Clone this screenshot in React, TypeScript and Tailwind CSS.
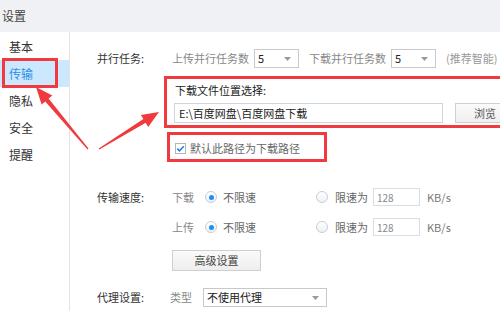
import React from "react";

const RED = "#f03a3d";

function arrowPoints(tx: number, ty: number, hx: number, hy: number) {
  const dx = hx - tx;
  const dy = hy - ty;
  const len = Math.hypot(dx, dy);
  const ux = dx / len;
  const uy = dy / len;
  const nx = -uy;
  const ny = ux;
  const headLen = 17;
  const headW = 14;
  const bx = hx - ux * headLen;
  const by = hy - uy * headLen;
  const p = (x: number, y: number) => `${x.toFixed(1)},${y.toFixed(1)}`;
  return [
    p(tx + nx * 0.6, ty + ny * 0.6),
    p(bx + nx * 2.2, by + ny * 2.2),
    p(bx + nx * headW / 2, by + ny * headW / 2),
    p(hx, hy),
    p(bx - nx * headW / 2, by - ny * headW / 2),
    p(bx - nx * 2.2, by - ny * 2.2),
    p(tx - nx * 0.6, ty - ny * 0.6),
  ].join(" ");
}

const Caret = () => (
  <svg width="7" height="4" viewBox="0 0 7 4" className="shrink-0">
    <path d="M0 0 L7 0 L3.5 4 Z" fill="#9a9a9a" />
  </svg>
);

const Select = ({ value, w }: { value: string; w: string }) => (
  <div
    className={`${w} h-[19px] border border-[#c9c9c9] bg-white flex items-center justify-between pl-[3px] pr-[7px] text-[11px] text-[#222]`}
  >
    <span>{value}</span>
    <Caret />
  </div>
);

const Radio = ({ checked }: { checked?: boolean }) => (
  <div className="w-[12px] h-[12px] rounded-full border border-[#c8cdd4] bg-gradient-to-b from-white to-[#eef1f5] flex items-center justify-center shrink-0">
    {checked && <div className="w-[5px] h-[5px] rounded-full bg-[#1f8ef1]" />}
  </div>
);

const SpeedRow = ({ label }: { label: string }) => (
  <div className="flex items-center h-[18px] whitespace-nowrap">
    <span className="text-[#888]">{label}</span>
    <div className="ml-[11px]">
      <Radio checked />
    </div>
    <span className="ml-[6px] text-[#666]">不限速</span>
    <div className="ml-[60px]">
      <Radio />
    </div>
    <span className="ml-[7px] text-[#666]">限速为</span>
    <div className="ml-[5px] w-[47px] h-[18px] border border-[#d9dee6] flex items-center pl-[3px] text-[#8a8a8a] text-[10px] shrink-0">
      128
    </div>
    <span className="ml-[7px] text-[#777]">KB/s</span>
  </div>
);

export default function App() {
  const menu = ["基本", "传输", "隐私", "安全", "提醒"];
  return (
    <div
      className="relative w-[500px] h-[311px] overflow-hidden bg-white text-[11px] text-[#333]"
      style={{ fontFamily: '"Noto Sans CJK SC", "Noto Sans", sans-serif' }}
    >
      <div className="h-[32px] bg-[#f0f1f4] flex items-center pl-[2px] text-[12px] text-[#444]">设置</div>
      <div className="flex h-[279px]">
        <div className="w-[70px] shrink-0 border-r border-[#e3e3e3] pt-[1px] text-[12px]">
          {menu.map((m) => (
            <div
              key={m}
              className={`h-[27px] flex items-center pl-[9px] ${
                m === "传输" ? "bg-[#cce8ff] text-[#2c8ee8]" : "text-[#333]"
              }`}
            >
              {m}
            </div>
          ))}
        </div>

        <div className="flex-1 min-w-0 pl-[27px] whitespace-nowrap">
          <div className="mt-[17px] h-[19px] flex items-center">
            <span className="w-[75px] shrink-0 text-[#333]">并行任务:</span>
            <span className="text-[#888]">上传并行任务数</span>
            <div className="ml-[5px] shrink-0">
              <Select value="5" w="w-[45px]" />
            </div>
            <span className="ml-[10px] text-[#888]">下载并行任务数</span>
            <div className="ml-[5px] shrink-0">
              <Select value="5" w="w-[45px]" />
            </div>
            <span className="ml-[10px] text-[#999]">(推荐智能)</span>
          </div>

          <div className="ml-[78px]">
            <div className="mt-[15px] h-[14px] leading-[14px] text-[#222]">下载文件位置选择:</div>
            <div className="mt-[6px] flex items-center -ml-[1px]">
              <div className="w-[269px] shrink-0 h-[20px] border border-[#cfd6e0] flex items-center pl-[4px] text-[#222]">
                E:\百度网盘\百度网盘下载
              </div>
              <div className="ml-[12px] w-[60px] shrink-0 h-[20px] border border-[#d0d0d0] bg-gradient-to-b from-[#fbfbfb] to-[#efefef] flex items-center justify-center text-[#555]">
                浏览
              </div>
            </div>
            <div className="mt-[18px] h-[14px] flex items-center">
              <svg width="11" height="11" viewBox="0 0 11 11" className="shrink-0">
                <rect x="0.5" y="0.5" width="10" height="10" fill="#fff" stroke="#b5b5b5" />
                <path d="M2.3 5.6 L4.5 7.8 L8.8 3.2" fill="none" stroke="#2a7fe4" strokeWidth="1.6" />
              </svg>
              <span className="ml-[4px] text-[#666]">默认此路径为下载路径</span>
            </div>
          </div>

          <div className="mt-[33px] flex">
            <span className="w-[75px] shrink-0 h-[18px] flex items-center text-[#333]">传输速度:</span>
            <div className="flex flex-col">
              <SpeedRow label="下载" />
              <div className="mt-[12px]">
                <SpeedRow label="上传" />
              </div>
              <div className="mt-[14px] w-[89px] h-[21px] border border-[#cfcfcf] bg-gradient-to-b from-[#fafafa] to-[#eeeeee] flex items-center justify-center text-[#444]">
                高级设置
              </div>
            </div>
          </div>

          <div className="mt-[17px] h-[19px] flex items-center">
            <span className="w-[73px] shrink-0 text-[#333]">代理设置:</span>
            <span className="text-[#888]">类型</span>
            <div className="ml-[11px] shrink-0">
              <Select value="不使用代理" w="w-[124px]" />
            </div>
          </div>
        </div>
      </div>

      {/* annotation boxes */}
      <div className="absolute left-[2px] top-[58px] w-[56px] h-[30px] border-[3px] border-[#f03a3d]" />
      <div className="absolute left-[164px] top-[76px] w-[345px] h-[52px] border-[3px] border-[#f03a3d]" />
      <div className="absolute left-[167px] top-[132px] w-[160px] h-[30px] border-[3px] border-[#f03a3d]" />

      <svg className="absolute left-0 top-0" width="500" height="311" viewBox="0 0 500 311">
        <polygon points={arrowPoints(88, 149, 36, 87)} fill={RED} />
        <polygon points={arrowPoints(99, 149, 159, 112)} fill={RED} />
      </svg>
    </div>
  );
}
